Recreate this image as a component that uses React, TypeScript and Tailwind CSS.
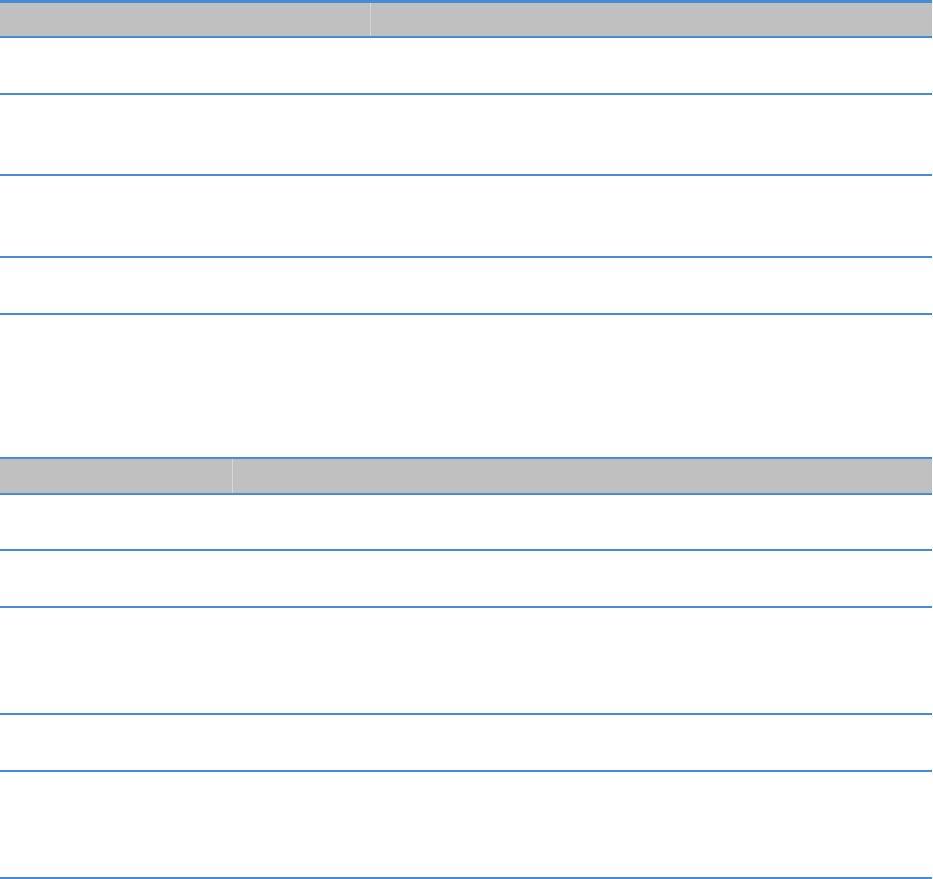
const BLUE = 'border-[#448dd6]'

type Table = {
  split: string
  top: string
  headerH: string
  rows: string[]
}

// heights are border-box (row height incl. its 2px bottom rule)
const tables: Table[] = [
  {
    split: 'grid-cols-[371px_1fr]',
    top: 'border-t-[3px]',
    headerH: 'h-[35px]',
    rows: ['h-[57px]', 'h-[81px]', 'h-[82px]', 'h-[57px]'],
  },
  {
    split: 'grid-cols-[233px_1fr]',
    top: 'border-t-2',
    headerH: 'h-[36px]',
    rows: ['h-[56px]', 'h-[57px]', 'h-[107px]', 'h-[57px]', 'h-[107px]'],
  },
]

function DocTable({ table }: { table: Table }) {
  return (
    <div className={`w-[932px] ${table.top} ${BLUE}`}>
      <div className={`grid ${table.split} ${table.headerH} border-b-2 ${BLUE} bg-[#c0c0c0]`}>
        <div className="border-r border-[#d6d6d6]" />
        <div />
      </div>
      {table.rows.map((h, i) => (
        <div key={i} className={`grid ${table.split} ${h} border-b-2 ${BLUE}`}>
          <div />
          <div />
        </div>
      ))}
    </div>
  )
}

export default function App() {
  return (
    <div className="flex h-[879px] w-[933px] flex-col bg-white font-['Liberation_Sans',sans-serif]">
      <DocTable table={tables[0]} />
      <div className="h-[142px] shrink-0" />
      <DocTable table={tables[1]} />
    </div>
  )
}
